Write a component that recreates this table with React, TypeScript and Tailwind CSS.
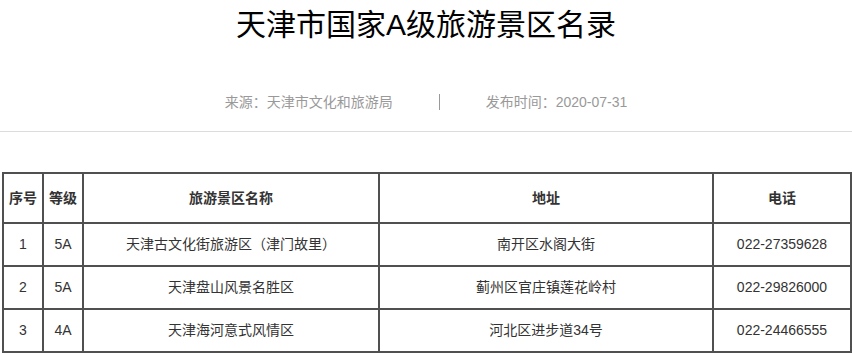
const rows = [
  { no: "1", level: "5A", name: "天津古文化街旅游区（津门故里）", addr: "南开区水阁大街", tel: "022-27359628" },
  { no: "2", level: "5A", name: "天津盘山风景名胜区", addr: "蓟州区官庄镇莲花岭村", tel: "022-29826000" },
  { no: "3", level: "4A", name: "天津海河意式风情区", addr: "河北区进步道34号", tel: "022-24466555" },
];

const cell = "border-2 border-[#505050] text-center align-middle p-0";

export default function App() {
  return (
    <div className="w-[852px] h-[354px] overflow-hidden bg-white text-[#333] font-['Liberation_Sans','Noto_Sans_CJK_SC',sans-serif]">
      <h1 className="h-[50px] text-center text-[30px] leading-[50px] font-normal text-black">
        天津市国家A级旅游景区名录
      </h1>
      <div className="mt-[37px] border-b border-[#dcdcdc] pb-[14px]">
        <div className="flex h-[30px] items-center justify-center text-[14px] leading-[30px] text-[#999]">
          <span>来源：天津市文化和旅游局</span>
          <span className="mx-[46px] h-[16px] w-px bg-[#999]" />
          <span>发布时间：2020-07-31</span>
        </div>
      </div>
      <table className="ml-[2px] mt-[40px] w-[848px] table-fixed border-collapse text-[14px]">
        <colgroup>
          <col className="w-[40px]" />
          <col className="w-[40px]" />
          <col className="w-[296px]" />
          <col className="w-[334px]" />
          <col className="w-[138px]" />
        </colgroup>
        <thead>
          <tr className="h-[50px] font-bold">
            <th className={cell}>序号</th>
            <th className={cell}>等级</th>
            <th className={cell}>旅游景区名称</th>
            <th className={cell}>地址</th>
            <th className={cell}>电话</th>
          </tr>
        </thead>
        <tbody>
          {rows.map((r) => (
            <tr key={r.no} className="h-[43px]">
              <td className={cell}>{r.no}</td>
              <td className={cell}>{r.level}</td>
              <td className={cell}>{r.name}</td>
              <td className={cell}>{r.addr}</td>
              <td className={cell}>{r.tel}</td>
            </tr>
          ))}
        </tbody>
      </table>
    </div>
  );
}
